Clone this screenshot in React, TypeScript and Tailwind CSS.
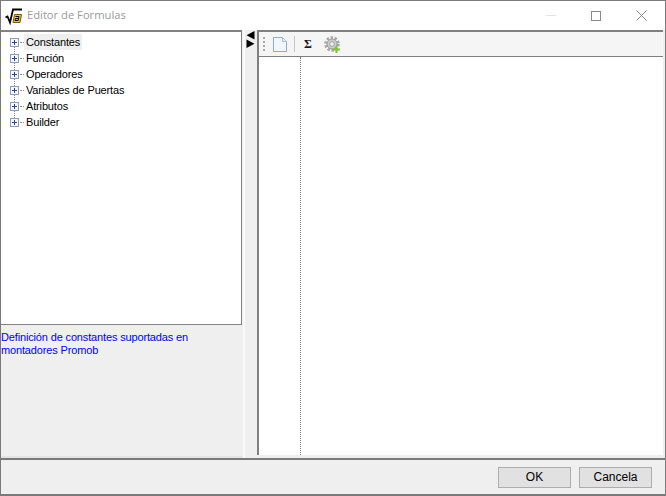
import React from 'react';

const items = ['Constantes', 'Función', 'Operadores', 'Variables de Puertas', 'Atributos', 'Builder'];

function Expander() {
  return (
    <svg width="11" height="11" viewBox="0 0 11 11" className="shrink-0">
      <rect x="1.5" y="1.5" width="8" height="8" fill="#f4f6fa" stroke="#8f9db5" />
      <path d="M3 5.5h5M5.5 3v5" stroke="#2b4a80" />
    </svg>
  );
}

function TreeRow({ label, index }: { label: string; index: number }) {
  return (
    <div className="relative flex h-4 items-center pl-[8px]">
      {index < items.length - 1 && (
        <div className="absolute left-[13px] top-[8px] h-4 border-l border-dotted border-[#8a8a8a]" />
      )}
      <div className="relative z-10">
        <Expander />
      </div>
      <div className="w-[4px] border-t border-dotted border-[#8a8a8a]" />
      <span className={`px-[2px] leading-4 text-black ${index === 0 ? 'bg-[#efefef]' : ''}`}>{label}</span>
    </div>
  );
}

function LogoIcon() {
  return (
    <svg width="18" height="18" viewBox="0 0 18 18">
      <path d="M0.5 10.5l2-1 2.5 6L8 2.5h9" fill="none" stroke="#000" strokeWidth="1.8" />
      <path d="M9.5 7.5h7l-1.5 8h-7z" fill="#f5c518" stroke="#7a5a00" />
      <path d="M10.5 9.5h3.5l-.8 4h-3.2l.4-2h3" fill="none" stroke="#000" />
    </svg>
  );
}

function PageIcon() {
  return (
    <svg width="14" height="15" viewBox="0 0 14 15">
      <path d="M0.5 0.5h9l4 4v10h-13z" fill="#f2f7ff" stroke="#8fabd6" />
      <path d="M9.5 0.5v4h4" fill="#dfe9f7" stroke="#a9bfe0" />
    </svg>
  );
}

function GearIcon() {
  return (
    <svg width="17" height="17" viewBox="0 0 17 17">
      <circle cx="8" cy="8" r="6" fill="none" stroke="#a8a8a8" strokeWidth="3.6" strokeDasharray="2.2 1.55" />
      <circle cx="8" cy="8" r="5" fill="#cfcfcf" stroke="#9a9a9a" />
      <circle cx="8" cy="8" r="2.4" fill="#f0f0f0" stroke="#9a9a9a" />
      <path d="M12.5 10v7M9 13.5h7" stroke="#7cc72a" strokeWidth="2" />
    </svg>
  );
}

export default function App() {
  return (
    <div className="flex h-[496px] w-[666px] flex-col border border-[#7a7a7a] bg-[#efefef] text-[11px] tracking-[-0.15px] font-['Liberation_Sans',sans-serif]">
      {/* Title bar */}
      <div className="flex h-[29px] shrink-0 items-center bg-white pl-[4px]">
        <LogoIcon />
        <span className="ml-[4px] pb-[1px] text-[11.2px] tracking-normal text-[#9a9a9a] font-['Open_Sans',sans-serif]">Editor de Formulas</span>
        <div className="ml-auto flex items-center">
          <div className="mr-[35px] w-[10px] border-t border-[#e2e2e2]" />
          <div className="mr-[35px] h-[10px] w-[10px] border border-[#8a8a8a]" />
          <svg width="11" height="11" viewBox="0 0 11 11" className="mr-[18px]">
            <path d="M0.5 0.5l10 10M10.5 0.5l-10 10" stroke="#8a8a8a" />
          </svg>
        </div>
      </div>

      {/* Main area */}
      <div className="flex h-[428px] shrink-0">
        <div className="flex w-[242px] shrink-0 flex-col">
          <div className="h-[295px] w-[241px] shrink-0 border-t-2 border-r border-b border-[#828282] bg-white pt-[2px]">
            {items.map((label, i) => (
              <TreeRow key={label} label={label} index={i} />
            ))}
          </div>
          <div className="flex-1 border-b-2 border-[#e3e3e3] pt-[6px] leading-[13px] text-[#0000ff]">
            Definición de constantes suportadas en
            <br />
            montadores Promob
          </div>
        </div>

        {/* Splitter */}
        <div className="flex w-[14px] shrink-0 flex-col border-l-2 border-[#fafafa] pt-[1px]">
          <svg width="9" height="17" viewBox="0 0 9 17" className="ml-[1px]">
            <path d="M8.5 0v8.5L0.5 4.25z" fill="#000" />
            <path d="M0.5 8.5V17l8-4.25z" fill="#000" />
          </svg>
        </div>

        {/* Editor pane */}
        <div className="flex w-[406px] shrink-0 flex-col pb-[3px]">
          <div className="flex h-[26px] shrink-0 items-center border-t-2 border-l-2 border-[#7f7f7f] bg-[#f5f5f5] pl-[4px]">
            <div className="h-[14px] border-l-2 border-dotted border-[#a8a8a8]" />
            <div className="ml-[8px]">
              <PageIcon />
            </div>
            <div className="ml-[7px] h-[16px] border-l border-[#c4c4c4]" />
            <span className="ml-[9px] w-[8px] text-[12px] font-bold tracking-normal leading-none text-[#1a1a1a] font-['Liberation_Serif',serif]">Σ</span>
            <div className="ml-[12px]">
              <GearIcon />
            </div>
          </div>
          <div className="flex flex-1 border-t border-l-2 border-[#7f7f7f] bg-white">
            <div className="w-[42px] border-r border-dotted border-[#7a7a7a]" />
          </div>
        </div>
      </div>

      {/* Footer */}
      <div className="flex flex-1 items-center justify-end gap-[8px] border-t-2 border-b border-[#7a7a7a] pr-[13px]">
        <button className="h-[21px] w-[73px] border border-[#adadad] bg-[#e1e1e1] text-[12px] tracking-normal text-black">OK</button>
        <button className="h-[21px] w-[73px] border border-[#adadad] bg-[#e1e1e1] text-[12px] tracking-normal text-black">Cancela</button>
      </div>
    </div>
  );
}
